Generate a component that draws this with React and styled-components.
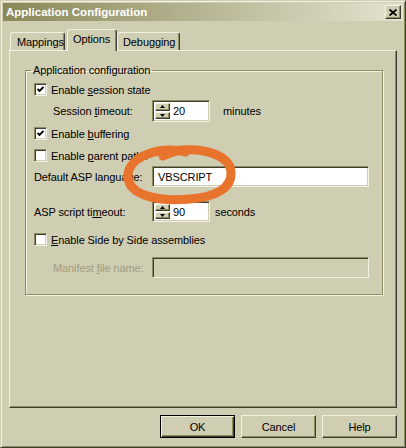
import React from 'react';
import styled, { createGlobalStyle, css } from 'styled-components';

const c = {
  face: '#CFCDB2',
  hi: '#F2F1E4',
  shadow: '#8E8C5E',
  dark: '#3E3D35',
  grey: '#A09E82',
  ink: '#E8732C',
};

const GlobalStyle = createGlobalStyle`
  html, body { margin: 0; padding: 0; background: ${c.face}; }
  body {
    font-family: "Liberation Sans", Arial, sans-serif;
    font-size: 11px;
    letter-spacing: -0.1px;
    color: #000;
  }
  * { box-sizing: border-box; }
`;

const raised = css`
  border: 1px solid;
  border-color: ${c.hi} ${c.dark} ${c.dark} ${c.hi};
  box-shadow: inset -1px -1px 0 ${c.shadow};
`;

const sunken = css`
  border: 1px solid;
  border-color: ${c.shadow} ${c.hi} ${c.hi} ${c.shadow};
  box-shadow: inset 1px 1px 0 ${c.dark}, inset -1px -1px 0 ${c.face};
`;

const Window = styled.div`
  position: relative;
  width: 406px;
  height: 448px;
  background: ${c.face};
  border: 1px solid;
  border-color: ${c.face} ${c.dark} ${c.dark} ${c.face};
  box-shadow: inset 1px 1px 0 ${c.hi}, inset -1px -1px 0 ${c.shadow};
  padding: 2px;
  display: flex;
  flex-direction: column;
  overflow: hidden;
`;

const TitleBar = styled.div`
  height: 18px;
  flex: none;
  display: flex;
  align-items: center;
  justify-content: space-between;
  padding-left: 3px;
  background: linear-gradient(to right, #8A8858, #E4E3D0);
  color: #fff;
  font-weight: bold;
  font-size: 11.5px;
  letter-spacing: 0;
`;

const CloseBtn = styled.div`
  width: 16px;
  height: 14px;
  margin-right: 2px;
  background: ${c.face};
  ${raised};
  display: flex;
  align-items: center;
  justify-content: center;
`;

const Body = styled.div`
  flex: 1;
  display: flex;
  flex-direction: column;
  padding: 8px 6px 0 6px;
`;

const TabRow = styled.div`
  height: 21px;
  display: flex;
  align-items: flex-end;
  padding-left: 1px;
  position: relative;
  z-index: 1;
`;

const Tab = styled.div`
  width: ${p => p.$w}px;
  height: ${p => (p.$active ? 22 : 18)}px;
  margin-left: ${p => p.$ml || 0}px;
  margin-bottom: ${p => (p.$active ? -1 : 0)}px;
  padding: 3px 0 0 ${p => p.$pl}px;
  line-height: 13px;
  background: ${c.face};
  border-top: 1px solid ${c.hi};
  border-left: 1px solid ${c.hi};
  border-right: 1px solid ${c.dark};
  box-shadow: inset -1px 0 0 ${c.shadow};
  border-radius: 3px 3px 0 0;
`;

const Panel = styled.div`
  height: 358px;
  flex: none;
  border: 1px solid;
  border-color: ${c.hi} ${c.dark} ${c.dark} ${c.hi};
  box-shadow: inset -1px -1px 0 ${c.shadow};
  padding: 13px 13px 0 15px;
`;

const Group = styled.fieldset`
  margin: 0;
  padding: 0;
  min-width: 0;
  border: 1px solid ${c.shadow};
  box-shadow: 1px 1px 0 ${c.hi}, inset 1px 1px 0 ${c.hi};
`;

const Legend = styled.legend`
  margin-left: 5px;
  padding: 0 2px;
  line-height: 13px;
  height: 13px;
`;

const Rows = styled.div`
  padding: 6px 0 16px 8px;
  display: flex;
  flex-direction: column;
`;

const Row = styled.div`
  display: flex;
  align-items: center;
  height: ${p => p.$h}px;
  margin-top: ${p => p.$mt || 0}px;
`;

const Label = styled.div`
  width: 118px;
  flex: none;
  padding-left: ${p => (p.$indent ? 19 : 0)}px;
  color: ${p => (p.$disabled ? c.grey : '#000')};
  white-space: nowrap;
`;

const CheckBox = styled.div`
  width: 13px;
  height: 13px;
  flex: none;
  background: #fff;
  ${sunken};
  display: flex;
  align-items: center;
  justify-content: center;
  margin-right: 4px;
`;

const Spinner = styled.div`
  width: 58px;
  height: ${p => p.$h}px;
  flex: none;
  background: #fff;
  ${sunken};
  padding: 2px;
  display: flex;
`;

const SpinBtns = styled.div`
  width: 15px;
  display: flex;
  flex-direction: column;
  gap: 1px;
  background: #fff;
`;

const SpinBtn = styled.div`
  flex: 1;
  background: ${c.face};
  ${raised};
  display: flex;
  align-items: center;
  justify-content: center;
`;

const SpinValue = styled.div`
  flex: 1;
  padding-left: 3px;
  display: flex;
  align-items: center;
`;

const Unit = styled.span`
  margin-left: ${p => p.$ml}px;
`;

const TextBox = styled.div`
  width: 217px;
  height: 21px;
  flex: none;
  background: ${p => (p.$disabled ? c.face : '#fff')};
  ${sunken};
  padding-left: 5px;
  display: flex;
  align-items: center;
`;

const Footer = styled.div`
  display: flex;
  justify-content: flex-end;
  gap: 6px;
  margin-top: 7px;
`;

const Button = styled.div`
  width: 75px;
  height: 23px;
  display: flex;
  align-items: center;
  justify-content: center;
  background: ${c.face};
  ${p =>
    p.$default
      ? css`
          border: 1px solid #000;
          box-shadow: inset 1px 1px 0 ${c.hi}, inset -1px -1px 0 ${c.dark},
            inset -2px -2px 0 ${c.shadow};
        `
      : raised};
`;

const Scribble = styled.svg`
  position: absolute;
  top: -1px;
  left: -1px;
  pointer-events: none;
`;

const Check = () => (
  <svg width="7" height="7" viewBox="0 0 7 7">
    <polyline points="0.5,3 2.5,5 6.5,1" fill="none" stroke="#000" strokeWidth="1.8" />
  </svg>
);

const Arrow = ({ up }) => (
  <svg width="5" height="3" viewBox="0 0 5 3">
    <polygon points={up ? '2.5,0 5,3 0,3' : '0,0 5,0 2.5,3'} fill="#000" />
  </svg>
);

const CheckRow = ({ checked, mt, children }) => (
  <Row $h={13} $mt={mt}>
    <CheckBox>{checked && <Check />}</CheckBox>
    <span>{children}</span>
  </Row>
);

const SpinBox = ({ value, h }) => (
  <Spinner $h={h}>
    <SpinBtns>
      <SpinBtn><Arrow up /></SpinBtn>
      <SpinBtn><Arrow /></SpinBtn>
    </SpinBtns>
    <SpinValue>{value}</SpinValue>
  </Spinner>
);

export default function App() {
  return (
    <>
      <GlobalStyle />
      <Window>
        <TitleBar>
          <span>Application Configuration</span>
          <CloseBtn>
            <svg width="8" height="7" viewBox="0 0 8 7">
              <path d="M0.5 0.5 L7.5 6.5 M7.5 0.5 L0.5 6.5" stroke="#000" strokeWidth="1.8" />
            </svg>
          </CloseBtn>
        </TitleBar>
        <Body>
          <TabRow>
            <Tab $w={55} $pl={6}>Mappings</Tab>
            <Tab $w={50} $ml={2} $pl={5} $active>Options</Tab>
            <Tab $w={63} $pl={5}>Debugging</Tab>
          </TabRow>
          <Panel>
            <Group>
              <Legend>Application configuration</Legend>
              <Rows>
                <CheckRow checked>Enable <u>s</u>ession state</CheckRow>
                <Row $h={22} $mt={4}>
                  <Label $indent>Session <u>t</u>imeout:</Label>
                  <SpinBox value="20" h={22} />
                  <Unit $ml={13}>minutes</Unit>
                </Row>
                <CheckRow checked mt={5}>Enable <u>b</u>uffering</CheckRow>
                <CheckRow mt={9}>Enable <u>p</u>arent paths</CheckRow>
                <Row $h={21} $mt={4}>
                  <Label>Default ASP language:</Label>
                  <TextBox>VBSCRIPT</TextBox>
                </Row>
                <Row $h={21} $mt={14}>
                  <Label>ASP script ti<u>m</u>eout:</Label>
                  <SpinBox value="90" h={21} />
                  <Unit $ml={5}>seconds</Unit>
                </Row>
                <CheckRow mt={11}><u>E</u>nable Side by Side assemblies</CheckRow>
                <Row $h={21} $mt={11}>
                  <Label $indent $disabled>Manifest <u>f</u>ile name:</Label>
                  <TextBox $disabled />
                </Row>
              </Rows>
            </Group>
          </Panel>
          <Footer>
            <Button $default>OK</Button>
            <Button>Cancel</Button>
            <Button>Help</Button>
          </Footer>
        </Body>
        <Scribble width="406" height="448" viewBox="0 0 406 448">
          <path
            d="M186 152 C160 146 128 156 128 176 C128 196 160 202 190 199 C216 197 232 188 231 172 C230 156 206 148 182 150 C174 151 168 154 163 156"
            fill="none"
            stroke={c.ink}
            strokeWidth="9"
            strokeLinecap="round"
            strokeLinejoin="round"
          />
        </Scribble>
      </Window>
    </>
  );
}
